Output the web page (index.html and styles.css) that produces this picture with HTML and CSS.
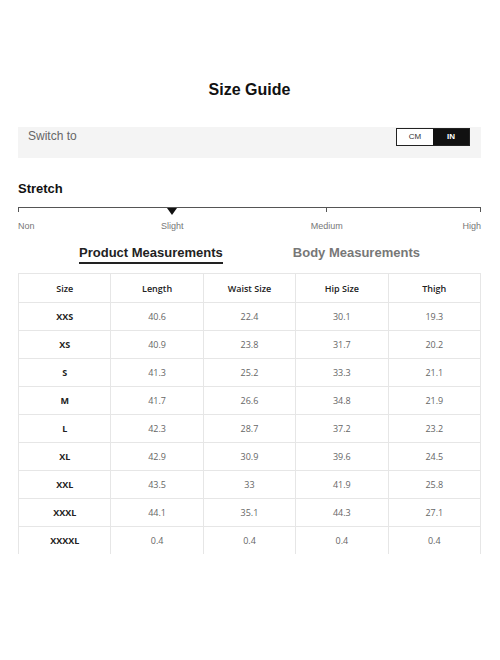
FILE: index.html
```html
<!DOCTYPE html>
<html>
<head>
<meta charset="utf-8">
<link rel="stylesheet" href="styles.css">
</head>
<body>
<div class="page">
  <h1 class="title">Size Guide</h1>
  <div class="switch-bar">
    <span class="switch-label">Switch to</span>
    <div class="toggle">
      <span class="opt">CM</span>
      <span class="opt active">IN</span>
    </div>
  </div>
  <h2 class="stretch-title">Stretch</h2>
  <div class="scale">
    <div class="scale-line">
      <span class="tick tick-start"></span>
      <span class="tick tick-mid"></span>
      <span class="tick tick-end"></span>
      <span class="marker"></span>
    </div>
    <div class="scale-labels">
      <span class="lbl l-non">Non</span>
      <span class="lbl l-slight">Slight</span>
      <span class="lbl l-medium">Medium</span>
      <span class="lbl l-high">High</span>
    </div>
  </div>
  <div class="tabs">
    <span class="tab active">Product Measurements</span>
    <span class="tab">Body Measurements</span>
  </div>
  <table class="sizes">
    <thead>
      <tr><th>Size</th><th>Length</th><th>Waist Size</th><th>Hip Size</th><th>Thigh</th></tr>
    </thead>
    <tbody>
      <tr><th>XXS</th><td>40.6</td><td>22.4</td><td>30.1</td><td>19.3</td></tr>
      <tr><th>XS</th><td>40.9</td><td>23.8</td><td>31.7</td><td>20.2</td></tr>
      <tr><th>S</th><td>41.3</td><td>25.2</td><td>33.3</td><td>21.1</td></tr>
      <tr><th>M</th><td>41.7</td><td>26.6</td><td>34.8</td><td>21.9</td></tr>
      <tr><th>L</th><td>42.3</td><td>28.7</td><td>37.2</td><td>23.2</td></tr>
      <tr><th>XL</th><td>42.9</td><td>30.9</td><td>39.6</td><td>24.5</td></tr>
      <tr><th>XXL</th><td>43.5</td><td>33</td><td>41.9</td><td>25.8</td></tr>
      <tr><th>XXXL</th><td>44.1</td><td>35.1</td><td>44.3</td><td>27.1</td></tr>
      <tr><th>XXXXL</th><td>0.4</td><td>0.4</td><td>0.4</td><td>0.4</td></tr>
    </tbody>
  </table>
</div>
</body>
</html>
```
FILE: styles.css
```css
html, body {
  margin: 0;
  padding: 0;
  background: #ffffff;
}
body {
  font-family: "Liberation Sans", Arial, sans-serif;
  color: #111;
}
.page {
  padding: 80px 19px 0 18px;
}
.title {
  margin: 0;
  font-size: 16px;
  line-height: 20px;
  font-weight: bold;
  text-align: center;
  color: #111;
}
.switch-bar {
  margin-top: 27px;
  height: 31px;
  box-sizing: border-box;
  background: #f4f4f4;
  display: flex;
  justify-content: space-between;
  align-items: flex-start;
  padding: 1px 11px 0 10px;
}
.switch-label {
  font-size: 12px;
  line-height: 15px;
  color: #666;
  margin-top: 1px;
}
.toggle {
  display: flex;
  border: 1px solid #222;
  height: 18px;
  box-sizing: border-box;
}
.opt {
  width: 36px;
  font-size: 8px;
  line-height: 16px;
  text-align: center;
  background: #fff;
  color: #333;
}
.opt.active {
  background: #111;
  color: #fff;
  font-weight: bold;
}
.stretch-title {
  margin: 23px 0 0;
  font-size: 13px;
  line-height: 15px;
  font-weight: bold;
  color: #111;
}
.scale {
  margin-top: 11px;
}
.scale-line {
  position: relative;
  height: 0;
  border-top: 1px solid #555;
}
.tick {
  position: absolute;
  top: 0;
  width: 1px;
  height: 4px;
  background: #555;
}
.tick-start { left: 0; }
.tick-mid { left: 66.5%; }
.tick-end { right: 0; }
.marker {
  position: absolute;
  top: 0;
  left: 33.3%;
  margin-left: -5px;
  width: 0;
  height: 0;
  border-left: 5px solid transparent;
  border-right: 5px solid transparent;
  border-top: 7px solid #111;
}
.scale-labels {
  margin-top: 13px;
  display: grid;
  grid-template-columns: repeat(6, 1fr);
  font-size: 9px;
  line-height: 11px;
  color: #777;
}
.l-non { grid-column: 1; text-align: left; }
.l-slight { grid-column: 2 / span 2; text-align: center; }
.l-medium { grid-column: 4 / span 2; text-align: center; }
.l-high { grid-column: 6; text-align: right; }
.tabs {
  margin-top: 13px;
  display: flex;
  justify-content: center;
  gap: 70px;
}
.tab {
  font-size: 13px;
  line-height: 16px;
  font-weight: bold;
  color: #777;
  padding-bottom: 1px;
  border-bottom: 2px solid transparent;
}
.tab.active {
  color: #222;
  border-bottom-color: #222;
}
.sizes {
  margin-top: 9px;
  width: 100%;
  border-collapse: collapse;
  table-layout: fixed;
  font-family: "Open Sans", "Liberation Sans", sans-serif;
  font-size: 9px;
}
.sizes th, .sizes td {
  border-left: 1px solid #e6e6e6;
  border-right: 1px solid #e6e6e6;
  border-top: 1px solid #e6e6e6;
  text-align: center;
  padding: 0;
  height: 27px;
}
.sizes thead th {
  height: 28px;
  font-weight: 600;
  color: #222;
}
.sizes tbody th {
  font-weight: 700;
  color: #222;
}
.sizes td {
  color: #666;
}
```
